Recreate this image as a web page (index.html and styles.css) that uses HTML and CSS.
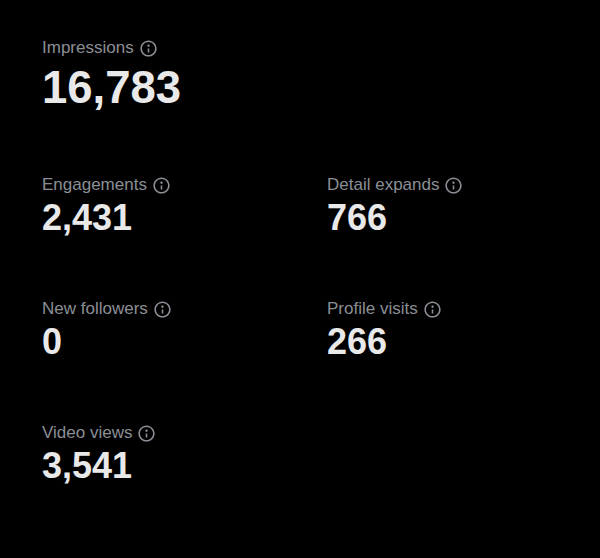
FILE: index.html
```html
<!DOCTYPE html>
<html>
<head>
<meta charset="utf-8">
<link rel="stylesheet" href="styles.css">
</head>
<body>
<main class="stats">
  <section class="stat stat-main">
    <div class="label">Impressions <svg class="info" viewBox="0 0 24 24"><path d="M13.5 8.5c0 .83-.67 1.5-1.5 1.5s-1.5-.67-1.5-1.5S11.170 7 12 7s1.5.67 1.5 1.5zM13 17v-5h-2v5h2zm-1 5.25c5.66 0 10.25-4.59 10.25-10.25S17.66 1.75 12 1.75 1.75 6.34 1.75 12 6.34 22.25 12 22.25zM20.25 12c0 4.56-3.69 8.25-8.25 8.25S3.75 16.56 3.75 12 7.44 3.75 12 3.75s8.25 3.69 8.25 8.25z"/></svg></div>
    <div class="value value-big">16,783</div>
  </section>
  <div class="grid">
    <section class="stat">
      <div class="label">Engagements <svg class="info" viewBox="0 0 24 24"><path d="M13.5 8.5c0 .83-.67 1.5-1.5 1.5s-1.5-.67-1.5-1.5S11.17 7 12 7s1.5.67 1.5 1.5zM13 17v-5h-2v5h2zm-1 5.25c5.66 0 10.25-4.59 10.25-10.25S17.66 1.75 12 1.75 1.75 6.34 1.75 12 6.34 22.25 12 22.25zM20.25 12c0 4.56-3.69 8.25-8.25 8.25S3.75 16.56 3.75 12 7.44 3.75 12 3.75s8.25 3.69 8.25 8.25z"/></svg></div>
      <div class="value">2,431</div>
    </section>
    <section class="stat">
      <div class="label">Detail expands <svg class="info" viewBox="0 0 24 24"><path d="M13.5 8.5c0 .83-.67 1.5-1.5 1.5s-1.5-.67-1.5-1.5S11.17 7 12 7s1.5.67 1.5 1.5zM13 17v-5h-2v5h2zm-1 5.25c5.66 0 10.25-4.59 10.25-10.25S17.66 1.75 12 1.75 1.75 6.34 1.75 12 6.34 22.25 12 22.25zM20.25 12c0 4.56-3.69 8.25-8.25 8.25S3.75 16.56 3.75 12 7.44 3.75 12 3.75s8.25 3.69 8.25 8.25z"/></svg></div>
      <div class="value">766</div>
    </section>
    <section class="stat">
      <div class="label">New followers <svg class="info" viewBox="0 0 24 24"><path d="M13.5 8.5c0 .83-.67 1.5-1.5 1.5s-1.5-.67-1.5-1.5S11.17 7 12 7s1.5.67 1.5 1.5zM13 17v-5h-2v5h2zm-1 5.25c5.66 0 10.25-4.59 10.25-10.25S17.66 1.75 12 1.75 1.75 6.34 1.75 12 6.34 22.25 12 22.25zM20.25 12c0 4.56-3.69 8.25-8.25 8.25S3.75 16.56 3.75 12 7.44 3.75 12 3.75s8.25 3.69 8.25 8.25z"/></svg></div>
      <div class="value">0</div>
    </section>
    <section class="stat">
      <div class="label">Profile visits <svg class="info" viewBox="0 0 24 24"><path d="M13.5 8.5c0 .83-.67 1.5-1.5 1.5s-1.5-.67-1.5-1.5S11.17 7 12 7s1.5.67 1.5 1.5zM13 17v-5h-2v5h2zm-1 5.25c5.66 0 10.25-4.59 10.25-10.25S17.66 1.75 12 1.75 1.75 6.34 1.75 12 6.34 22.25 12 22.25zM20.25 12c0 4.56-3.69 8.25-8.25 8.25S3.75 16.56 3.75 12 7.44 3.75 12 3.75s8.25 3.69 8.25 8.25z"/></svg></div>
      <div class="value">266</div>
    </section>
    <section class="stat">
      <div class="label">Video views <svg class="info" viewBox="0 0 24 24"><path d="M13.5 8.5c0 .83-.67 1.5-1.5 1.5s-1.5-.67-1.5-1.5S11.17 7 12 7s1.5.67 1.5 1.5zM13 17v-5h-2v5h2zm-1 5.25c5.66 0 10.25-4.59 10.25-10.25S17.66 1.75 12 1.75 1.75 6.34 1.75 12 6.34 22.25 12 22.25zM20.25 12c0 4.56-3.69 8.25-8.25 8.25S3.75 16.56 3.75 12 7.44 3.75 12 3.75s8.25 3.69 8.25 8.25z"/></svg></div>
      <div class="value">3,541</div>
    </section>
  </div>
</main>
</body>
</html>
```
FILE: styles.css
```css
html, body {
  margin: 0;
  background: #000;
  width: 600px;
  height: 558px;
  overflow: hidden;
}
.stats {
  padding: 36px 0 0 42px;
  font-family: "Liberation Sans", Arial, sans-serif;
}
.label {
  display: flex;
  align-items: center;
  gap: 5px;
  color: #8b8f95;
  font-size: 17px;
  line-height: 24px;
}
.info {
  width: 19px;
  height: 19px;
  fill: #8b8f95;
}
.value {
  color: #e9e9ea;
  font-weight: bold;
  font-size: 36px;
  line-height: 38px;
  margin-top: 2px;
}
.value-big {
  font-size: 45.5px;
  line-height: 52px;
  margin-top: 2px;
}
.grid {
  display: grid;
  grid-template-columns: 285px 285px;
  row-gap: 60px;
  margin-top: 59px;
}
```
